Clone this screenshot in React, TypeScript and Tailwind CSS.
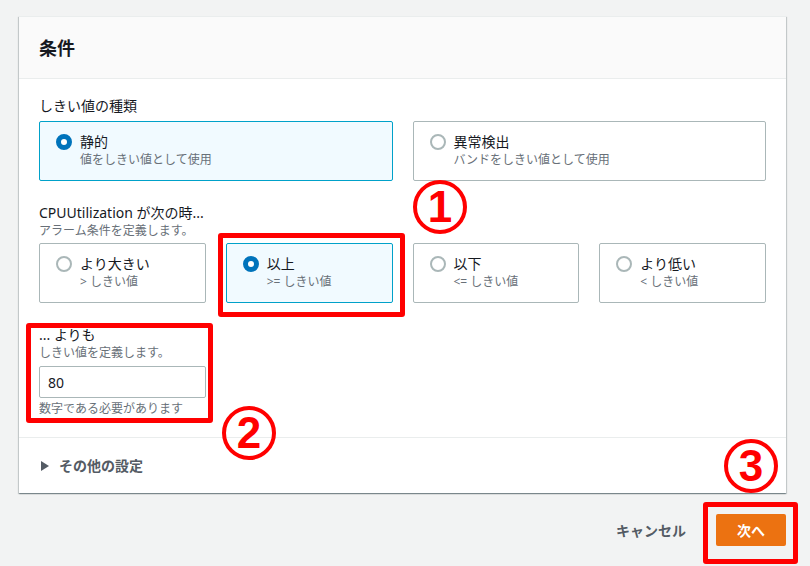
import React from "react";

const FONT = { fontFamily: '"Noto Sans", "Noto Sans CJK JP", sans-serif' };

function Radio({ checked }: { checked: boolean }) {
  return checked ? (
    <span className="w-[16px] h-[16px] rounded-full border-[5px] border-[#0073bb] bg-white shrink-0" />
  ) : (
    <span className="w-[16px] h-[16px] rounded-full border-[2px] border-[#aab7b8] bg-white shrink-0" />
  );
}

function Tile({
  title,
  desc,
  checked,
}: {
  title: string;
  desc: string;
  checked?: boolean;
}) {
  return (
    <div
      className={
        checked
          ? "flex-1 min-w-0 rounded-[2px] border border-[#00a1c9] bg-[#f1faff] pl-[16px] pt-[10px] pb-[12px]"
          : "flex-1 min-w-0 rounded-[2px] border border-[#aab7b8] bg-white pl-[16px] pt-[10px] pb-[12px]"
      }
    >
      <div className="flex items-center gap-[8px] h-[20px]">
        <Radio checked={!!checked} />
        <span className="text-[14px] leading-[20px] text-[#16191f]">{title}</span>
      </div>
      <div className="pl-[24px] text-[12px] leading-[16px] text-[#687078]">{desc}</div>
    </div>
  );
}

function Circled({ n, className }: { n: string; className: string }) {
  return (
    <div
      className={
        "absolute w-[54px] h-[54px] rounded-full border-[4px] border-[#ff0000] flex items-center justify-center text-[44px] leading-none font-bold text-[#ff0000] " +
        className
      }
      style={{ fontFamily: '"Liberation Sans", Arial, sans-serif' }}
    >
      {n}
    </div>
  );
}

export default function App() {
  return (
    <div className="relative w-[810px] h-[566px] bg-[#f2f3f3] overflow-hidden" style={FONT}>
      <div className="pl-[19px] pr-[24px] pt-[16px]">
        <div className="bg-white border-t border-[#eaeded] shadow-[0_1px_1px_0_rgba(0,28,36,0.3),1px_1px_1px_0_rgba(0,28,36,0.15),-1px_1px_1px_0_rgba(0,28,36,0.15)]">
          <div className="h-[62px] bg-[#fafafa] border-b border-[#eaeded] flex items-center px-[20px]">
            <h2 className="text-[18px] font-bold text-[#16191f] leading-[24px]">条件</h2>
          </div>

          <div className="px-[20px] pt-[17px] pb-[20px]">
            <div className="text-[14px] leading-[20px] text-[#16191f]">しきい値の種類</div>
            <div className="mt-[5px] flex gap-[20px]">
              <Tile title="静的" desc="値をしきい値として使用" checked />
              <Tile title="異常検出" desc="バンドをしきい値として使用" />
            </div>

            <div className="mt-[22px] text-[14px] leading-[20px] text-[#16191f]">
              CPUUtilization が次の時...
            </div>
            <div className="text-[12px] leading-[16px] text-[#687078]">アラーム条件を定義します。</div>
            <div className="mt-[4px] flex gap-[20px]">
              <Tile title="より大きい" desc="> しきい値" />
              <Tile title="以上" desc=">= しきい値" checked />
              <Tile title="以下" desc="<= しきい値" />
              <Tile title="より低い" desc="< しきい値" />
            </div>

            <div className="mt-[22px] text-[14px] leading-[20px] text-[#16191f]">... よりも</div>
            <div className="text-[12px] leading-[16px] text-[#687078]">しきい値を定義します。</div>
            <div className="mt-[5px] w-[167px] h-[32px] rounded-[2px] border border-[#aab7b8] bg-white flex items-center pl-[8px] text-[14px] text-[#16191f]">
              80
            </div>
            <div className="mt-[3px] text-[12px] leading-[16px] text-[#687078]">数字である必要があります</div>
          </div>

          <div className="border-t border-[#eaeded] px-[22px] pt-[18px] pb-[17px] flex items-center gap-[10px]">
            <svg width="8" height="10" viewBox="0 0 8 10">
              <path d="M0 0 L8 5 L0 10 Z" fill="#545b64" />
            </svg>
            <span className="text-[14px] leading-[20px] font-bold text-[#545b64]">その他の設定</span>
          </div>
        </div>

        <div className="mt-[21px] flex justify-end items-center gap-[30px]">
          <span className="text-[14px] font-bold text-[#545b64]">キャンセル</span>
          <button className="w-[70px] h-[32px] rounded-[2px] bg-[#ec7211] text-white text-[14px] font-bold">
            次へ
          </button>
        </div>
      </div>

      {/* annotations */}
      <div className="absolute left-[218px] top-[233px] w-[187px] h-[84px] border-[5px] border-[#ff0000] rounded-[3px]" />
      <div className="absolute left-[26px] top-[323px] w-[187px] h-[100px] border-[5px] border-[#ff0000] rounded-[3px]" />
      <div className="absolute left-[703px] top-[502px] w-[95px] h-[62px] border-[5px] border-[#ff0000] rounded-[3px]" />
      <Circled n="1" className="left-[413px] top-[180px]" />
      <Circled n="2" className="left-[222px] top-[406px]" />
      <Circled n="3" className="left-[724px] top-[439px]" />
    </div>
  );
}
